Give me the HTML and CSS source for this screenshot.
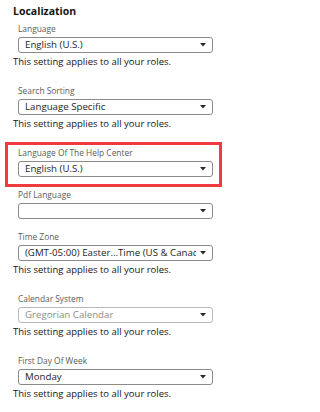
FILE: index.html
```html
<!DOCTYPE html>
<html lang="en">
<head>
<meta charset="utf-8">
<title>Localization</title>
<link rel="stylesheet" href="styles.css">
</head>
<body>
<main class="panel">
  <h2 class="title">Localization</h2>

  <section class="setting">
    <div class="field">
      <div class="label">Language</div>
      <div class="select"><span class="value">English (U.S.)</span><svg class="arrow" viewBox="0 0 6 4" width="6" height="4"><polygon points="0,0 6,0 3,3.6"/></svg></div>
    </div>
    <p class="help">This setting applies to all your roles.</p>
  </section>

  <section class="setting">
    <div class="field">
      <div class="label">Search Sorting</div>
      <div class="select"><span class="value">Language Specific</span><svg class="arrow" viewBox="0 0 6 4" width="6" height="4"><polygon points="0,0 6,0 3,3.6"/></svg></div>
    </div>
    <p class="help">This setting applies to all your roles.</p>
  </section>

  <section class="setting highlight">
    <div class="field">
      <div class="label">Language Of The Help Center</div>
      <div class="select"><span class="value">English (U.S.)</span><svg class="arrow" viewBox="0 0 6 4" width="6" height="4"><polygon points="0,0 6,0 3,3.6"/></svg></div>
    </div>
  </section>

  <section class="setting">
    <div class="field">
      <div class="label">Pdf Language</div>
      <div class="select"><span class="value"></span><svg class="arrow" viewBox="0 0 6 4" width="6" height="4"><polygon points="0,0 6,0 3,3.6"/></svg></div>
    </div>
  </section>

  <section class="setting">
    <div class="field">
      <div class="label">Time Zone</div>
      <div class="select"><span class="value">(GMT-05:00) Easter...Time (US &amp; Canada)</span><svg class="arrow" viewBox="0 0 6 4" width="6" height="4"><polygon points="0,0 6,0 3,3.6"/></svg></div>
    </div>
    <p class="help">This setting applies to all your roles.</p>
  </section>

  <section class="setting">
    <div class="field">
      <div class="label">Calendar System</div>
      <div class="select disabled"><span class="value">Gregorian Calendar</span><svg class="arrow" viewBox="0 0 6 4" width="6" height="4"><polygon points="0,0 6,0 3,3.6"/></svg></div>
    </div>
    <p class="help">This setting applies to all your roles.</p>
  </section>

  <section class="setting">
    <div class="field">
      <div class="label">First Day Of Week</div>
      <div class="select"><span class="value">Monday</span><svg class="arrow" viewBox="0 0 6 4" width="6" height="4"><polygon points="0,0 6,0 3,3.6"/></svg></div>
    </div>
    <p class="help">This setting applies to all your roles.</p>
  </section>
</main>
</body>
</html>
```
FILE: styles.css
```css
html, body {
  margin: 0;
  padding: 0;
  background: #ffffff;
}

body {
  font-family: "Open Sans", "Noto Sans", sans-serif;
  color: #161513;
}

.panel {
  box-sizing: border-box;
  width: 228px;
  padding: 4px 15px 0 13px;
}

.title {
  margin: 0 0 5px;
  font-size: 10.5px;
  font-weight: 700;
  line-height: 14px;
}

.setting {
  display: flex;
  flex-direction: column;
  padding-bottom: 12px;
}

.field {
  position: relative;
  margin-left: 5px;
}

.highlight .field::before {
  content: "";
  position: absolute;
  left: -13px;
  right: -9px;
  top: -5px;
  bottom: -10px;
  border: 3px solid #ef3b3f;
  pointer-events: none;
}

.label {
  margin-bottom: 3px;
  font-size: 8.4px;
  line-height: 11px;
  color: #5b5b5b;
}

.select {
  display: flex;
  align-items: center;
  gap: 4px;
  box-sizing: border-box;
  height: 16px;
  padding: 0 6px 1px 6px;
  border: 1px solid #8a8a8a;
  border-radius: 3px;
  background: #ffffff;
}

.value {
  flex: 1;
  min-width: 0;
  overflow: hidden;
  white-space: nowrap;
  font-size: 9.7px;
  line-height: 13px;
  color: #1e1e1e;
}

.arrow {
  flex: none;
  fill: #2b2b2b;
}

.select.disabled {
  border-color: #b8b8b8;
}

.select.disabled .value {
  color: #8c8c8c;
}

.help {
  margin: 3px 0 5px;
  font-size: 9.5px;
  line-height: 12px;
}
```
